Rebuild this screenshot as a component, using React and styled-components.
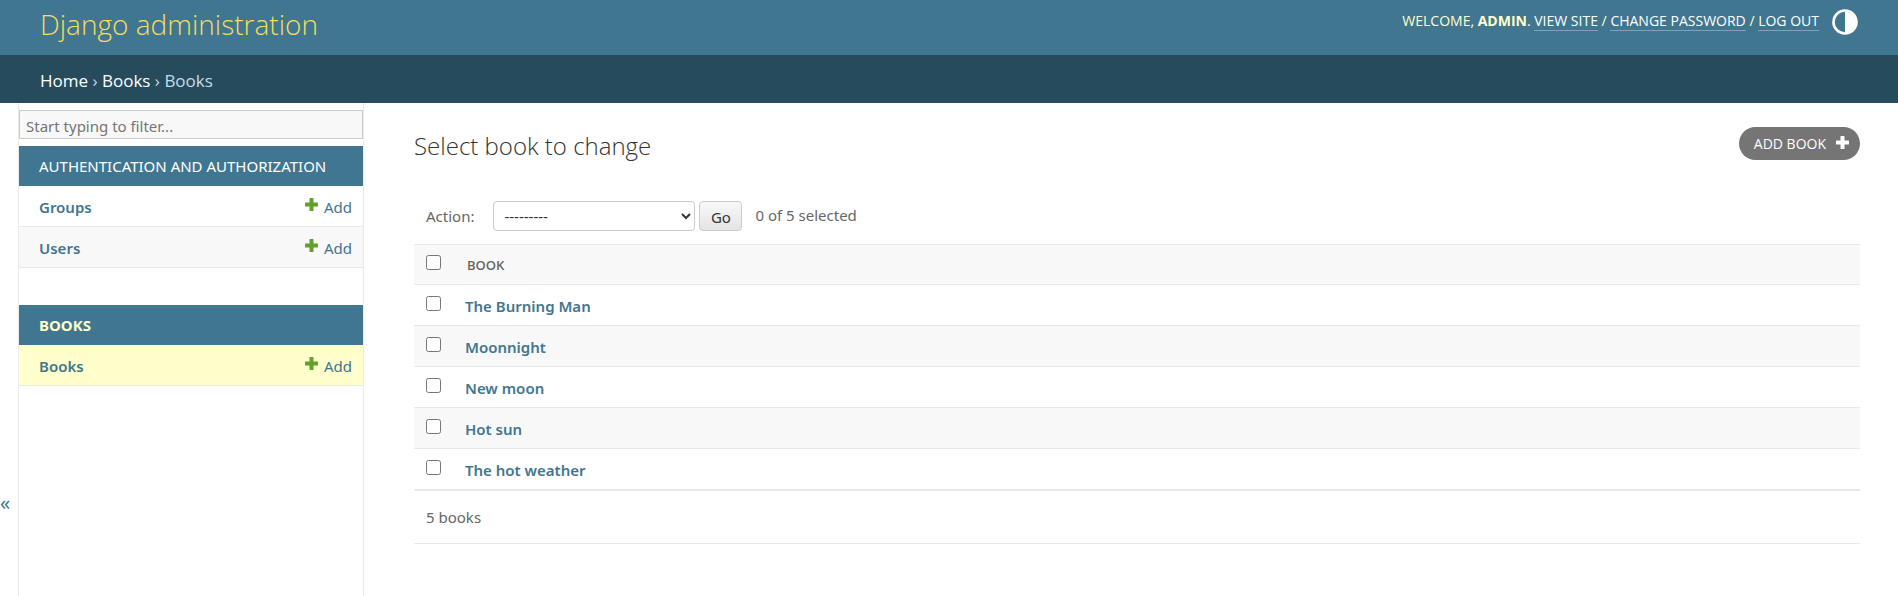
import React, { useState } from 'react';
import styled, { createGlobalStyle, css } from 'styled-components';

const GlobalStyle = createGlobalStyle`
  *, *::before, *::after { box-sizing: border-box; }
  body {
    margin: 0;
    background: #fff;
    color: #666;
    font-family: "Noto Sans", "Open Sans", sans-serif;
    font-size: 15px;
    line-height: 20px;
  }
  button, input, select { font: inherit; }
  a { color: #417690; text-decoration: none; }
`;

const Page = styled.div`
  display: flex;
  flex-direction: column;
  min-height: 100vh;
`;

const Header = styled.header`
  display: flex;
  justify-content: space-between;
  align-items: flex-start;
  height: 55px;
  padding: 0 40px;
  background: #417690;
  color: #ffc;
  font-family: "Open Sans", sans-serif;
`;

const SiteName = styled.h1`
  margin: 0;
  font-size: 28px;
  font-weight: 300;
  line-height: 48px;
  a { color: #f5dd5d; }
`;

const UserTools = styled.div`
  display: flex;
  align-items: center;
  gap: 13px;
  padding-top: 9px;
`;

const ToolLinks = styled.div`
  display: flex;
  align-items: baseline;
  padding-bottom: 1px;
  font-size: 14px;
  line-height: 18px;
  text-transform: uppercase;
  white-space: pre;
`;

const ToolLink = styled.a`
  color: #fff;
  border-bottom: 1px solid #7fa3b4;
`;

const ThemeButton = styled.button`
  display: flex;
  padding: 0;
  border: 0;
  background: none;
  color: #fff;
`;

const Breadcrumbs = styled.nav`
  height: 48px;
  padding: 0 40px;
  background: #264b5d;
  color: #c4dce8;
  font-family: "Open Sans", sans-serif;
  font-size: 17px;
  line-height: 52px;
  a { color: #fff; }
`;

const Body = styled.div`
  display: flex;
  flex: 1;
`;

const SidebarToggle = styled.button`
  display: flex;
  flex: 0 0 19px;
  align-items: center;
  padding: 306px 0 0;
  border: 0;
  border-right: 1px solid #eaeaea;
  background: #fff;
  color: #417690;
  font-size: 20px;
  line-height: 20px;
`;

const Sidebar = styled.nav`
  flex: 0 0 345px;
  padding-top: 7px;
  border-right: 1px solid #eaeaea;
`;

const FilterInput = styled.input`
  display: block;
  width: 100%;
  height: 29px;
  margin: 0 0 7px;
  padding: 2px 6px 0;
  border: 1px solid #ccc;
  border-radius: 0;
  background: #f8f8f8;
  outline: 0;
  &::placeholder { color: #757575; opacity: 1; }
`;

const Module = styled.table`
  width: 100%;
  margin-bottom: 37px;
  border-collapse: separate;
  border-spacing: 0;
`;

const ModuleCaption = styled.caption`
  height: 40px;
  padding: 0 20px;
  background: #417690;
  line-height: 40px;
  text-align: left;
  text-transform: uppercase;
  white-space: nowrap;
  a {
    color: ${(p) => (p.$current ? '#ffc' : '#fff')};
    font-weight: ${(p) => (p.$current ? 700 : 400)};
  }
`;

const ModelRow = styled.tr`
  background: ${(p) => (p.$current ? '#ffc' : p.$striped ? '#f8f8f8' : '#fff')};
  th, td {
    height: 41px;
    padding: 2px 11px 0 20px;
    border-bottom: 1px solid #eaeaea;
  }
  th { text-align: left; font-weight: 600; }
`;

const AddLink = styled.a`
  display: flex;
  align-items: center;
  justify-content: flex-end;
  gap: 6px;
  svg { color: #64a02c; margin-bottom: 6px; }
`;

const Main = styled.main`
  flex: 1;
  min-width: 0;
  padding: 24px 38px 40px 50px;
`;

const TitleRow = styled.div`
  display: flex;
  justify-content: space-between;
  align-items: flex-start;
  margin-bottom: 36px;
  font-family: "Open Sans", sans-serif;
`;

const Title = styled.h2`
  margin: 0;
  color: #333;
  font-size: 24px;
  font-weight: 300;
  line-height: 38px;
`;

const AddButton = styled.a`
  display: flex;
  align-items: center;
  gap: 10px;
  height: 33px;
  padding: 0 11px 0 15px;
  border-radius: 17px;
  background: #757575;
  color: #fff;
  font-size: 14px;
  text-transform: uppercase;
  svg { margin-bottom: 2px; }
`;

const Actions = styled.form`
  display: flex;
  align-items: center;
  height: 30px;
  margin-bottom: 13px;
  padding-left: 12px;
`;

const ActionLabel = styled.label`
  display: flex;
  align-items: center;
  gap: 19px;
`;

const ActionSelect = styled.select`
  width: 202px;
  height: 30px;
  padding: 0 6px;
  border: 1px solid #ccc;
  border-radius: 4px;
  background: #fff;
  color: #333;
`;

const GoButton = styled.button`
  width: 43px;
  height: 30px;
  margin: 0 13px 0 4px;
  padding: 1px 0 0;
  border: 1px solid #ccc;
  border-radius: 4px;
  background: linear-gradient(#f8f8f8, #e4e4e4);
  color: #333;
`;

const Counter = styled.span`
  padding-bottom: 2px;
`;

const Results = styled.table`
  width: 100%;
  border-collapse: separate;
  border-spacing: 0;
`;

const cell = css`
  height: 41px;
  padding: 2px 8px 0;
  border-bottom: 1px solid #e8e8e8;
  text-align: left;
  font-weight: 600;
  &:first-child { width: 43px; padding: 0 0 4px 12px; }
`;

const HeadRow = styled.tr`
  background: #f8f8f8;
  font-family: "Open Sans", sans-serif;
  font-size: 13px;
  text-transform: uppercase;
  th {
    ${cell}
    border-top: 1px solid #e8e8e8;
  }
  th + th { padding: 0 10px; }
`;

const BookRow = styled.tr`
  background: ${(p) => (p.$striped ? '#f8f8f8' : '#fff')};
  td, th { ${cell} }
`;

const Check = styled.input`
  display: block;
  width: 15px;
  height: 15px;
  margin: 0;
`;

const Paginator = styled.p`
  height: 54px;
  margin: 0;
  padding: 0 12px;
  border-top: 1px solid #e8e8e8;
  border-bottom: 1px solid #e8e8e8;
  line-height: 52px;
`;

const Plus = () => (
  <svg width="13" height="13" viewBox="0 0 13 13" aria-hidden="true">
    <path fill="currentColor" d="M5 0h3a.5.5 0 0 1 .5.5v4h4a.5.5 0 0 1 .5.5v3a.5.5 0 0 1-.5.5h-4v4a.5.5 0 0 1-.5.5H5a.5.5 0 0 1-.5-.5v-4h-4A.5.5 0 0 1 0 8V5a.5.5 0 0 1 .5-.5h4v-4A.5.5 0 0 1 5 0z" />
  </svg>
);

const HalfCircle = () => (
  <svg width="26" height="26" viewBox="0 0 26 26" aria-hidden="true">
    <circle cx="13" cy="13" r="11.5" fill="none" stroke="currentColor" strokeWidth="2.6" />
    <path fill="currentColor" d="M13 2.500a10.500 10.500 0 0 1 0 21z" />
  </svg>
);

const apps = [
  { name: 'Authentication and Authorization', models: ['Groups', 'Users'] },
  { name: 'Books', current: true, models: ['Books'] },
];

const books = ['The Burning Man', 'Moonnight', 'New moon', 'Hot sun', 'The hot weather'];

export default function App() {
  const [selected, setSelected] = useState([]);
  const [filter, setFilter] = useState('');
  const toggle = (book) =>
    setSelected((s) => (s.includes(book) ? s.filter((b) => b !== book) : [...s, book]));
  const allSelected = selected.length === books.length;

  return (
    <Page>
      <GlobalStyle />
      <Header>
        <SiteName><a href="#home">Django administration</a></SiteName>
        <UserTools>
          <ToolLinks>
            <span>Welcome, <strong>admin</strong>. </span>
            <ToolLink href="#site">View site</ToolLink>
            <span> / </span>
            <ToolLink href="#password">Change password</ToolLink>
            <span> / </span>
            <ToolLink href="#logout">Log out</ToolLink>
          </ToolLinks>
          <ThemeButton type="button" aria-label="Toggle theme"><HalfCircle /></ThemeButton>
        </UserTools>
      </Header>
      <Breadcrumbs aria-label="Breadcrumbs">
        <a href="#home">Home</a> › <a href="#books">Books</a> › Books
      </Breadcrumbs>
      <Body>
        <SidebarToggle type="button" aria-label="Toggle navigation">«</SidebarToggle>
        <Sidebar aria-label="Sidebar">
          <FilterInput
            type="text"
            placeholder="Start typing to filter..."
            aria-label="Filter navigation items"
            value={filter}
            onChange={(e) => setFilter(e.target.value)}
          />
          {apps.map((app) => (
            <Module key={app.name}>
              <ModuleCaption $current={app.current}><a href="#app">{app.name}</a></ModuleCaption>
              <tbody>
                {app.models
                  .filter((m) => m.toLowerCase().includes(filter.toLowerCase()))
                  .map((model, i) => (
                    <ModelRow key={model} $striped={i % 2 === 1} $current={app.current}>
                      <th scope="row"><a href="#model">{model}</a></th>
                      <td><AddLink href="#add"><Plus />Add</AddLink></td>
                    </ModelRow>
                  ))}
              </tbody>
            </Module>
          ))}
        </Sidebar>
        <Main>
          <TitleRow>
            <Title>Select book to change</Title>
            <AddButton href="#add-book">Add book<Plus /></AddButton>
          </TitleRow>
          <Actions onSubmit={(e) => e.preventDefault()}>
            <ActionLabel>
              Action:
              <ActionSelect defaultValue="">
                <option value="">---------</option>
                <option value="delete">Delete selected books</option>
              </ActionSelect>
            </ActionLabel>
            <GoButton type="submit">Go</GoButton>
            <Counter>{selected.length} of {books.length} selected</Counter>
          </Actions>
          <Results>
            <thead>
              <HeadRow>
                <th scope="col">
                  <Check
                    type="checkbox"
                    aria-label="Select all books"
                    checked={allSelected}
                    onChange={() => setSelected(allSelected ? [] : books)}
                  />
                </th>
                <th scope="col">Book</th>
              </HeadRow>
            </thead>
            <tbody>
              {books.map((book, i) => (
                <BookRow key={book} $striped={i % 2 === 1}>
                  <td>
                    <Check
                      type="checkbox"
                      aria-label={`Select ${book}`}
                      checked={selected.includes(book)}
                      onChange={() => toggle(book)}
                    />
                  </td>
                  <th scope="row"><a href="#book">{book}</a></th>
                </BookRow>
              ))}
            </tbody>
          </Results>
          <Paginator>{books.length} books</Paginator>
        </Main>
      </Body>
    </Page>
  );
}
